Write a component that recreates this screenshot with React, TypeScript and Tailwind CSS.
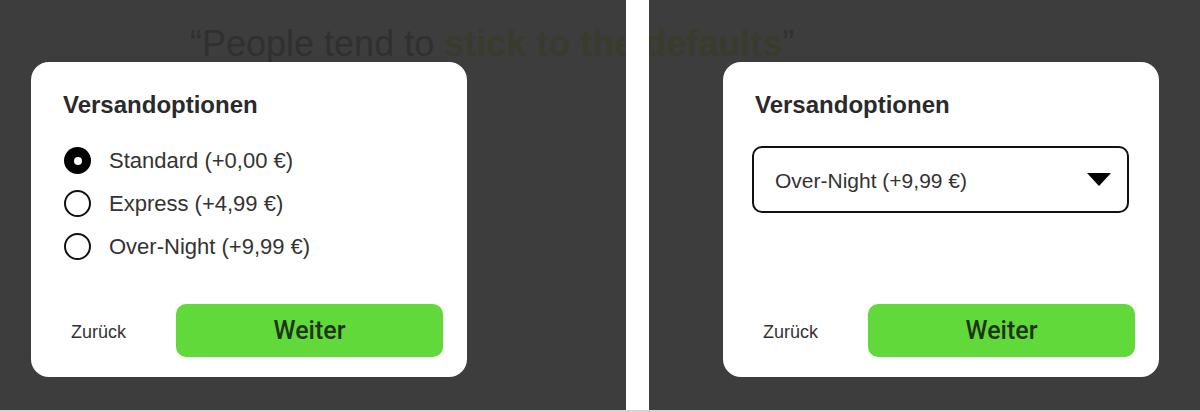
const options = ['Standard (+0,00 €)', 'Express (+4,99 €)', 'Over-Night (+9,99 €)'];

const Radio = ({ checked }: { checked: boolean }) =>
  checked ? (
    <span className="w-[27px] h-[27px] rounded-full bg-black flex items-center justify-center shrink-0">
      <span className="w-[8px] h-[8px] rounded-full bg-white" />
    </span>
  ) : (
    <span className="w-[27px] h-[27px] rounded-full border-2 border-[#111] bg-white shrink-0" />
  );

const Footer = () => (
  <div className="mt-auto flex items-center pb-[20px] pr-[24px]">
    <button className="ml-[40px] pt-[3px] text-[18px] text-[#333]">Zurück</button>
    <button
      className="ml-auto w-[267px] h-[53px] rounded-[10px] bg-[#62d93a] text-[25px] font-medium text-[#1f3418]"
      style={{ fontFamily: 'Roboto, "Liberation Sans", sans-serif' }}
    >
      Weiter
    </button>
  </div>
);

const Card = ({ children }: { children: React.ReactNode }) => (
  <div className="relative z-10 w-[436px] h-[315px] rounded-[18px] bg-white flex flex-col">
    <h2 className="pl-[32px] pt-[29px] text-[24px] leading-[28px] font-bold text-[#2a2a2a]">
      Versandoptionen
    </h2>
    {children}
    <Footer />
  </div>
);

export default function App() {
  return (
    <div
      className="relative w-[1200px] h-[412px] bg-[#3d3d3d] overflow-hidden"
      style={{ fontFamily: '"Liberation Sans", Arial, sans-serif' }}
    >
      {/* quote sits behind the cards and the divider */}
      <div className="absolute left-[190px] top-[24px] text-[36px] leading-[40px] text-[#303030] whitespace-nowrap">
        “People tend to <span className="text-[#393b2c] font-bold">stick to the defaults</span>”
      </div>

      <div className="flex h-[410px]">
        {/* radio variant */}
        <div className="w-[626px] pl-[31px] pt-[62px]">
          <Card>
            <div className="pl-[33px] pt-[20px] flex flex-col">
              {options.map((o, i) => (
                <label key={o} className="h-[43px] flex items-center gap-[18px] text-[22px] text-[#333]">
                  <Radio checked={i === 0} />
                  {o}
                </label>
              ))}
            </div>
          </Card>
        </div>

        <div className="relative z-10 w-[23px] bg-white" />

        {/* dropdown variant */}
        <div className="flex-1 pl-[74px] pt-[62px]">
          <Card>
            <div className="pl-[29px] pr-[30px] pt-[27px]">
              <div className="h-[67px] rounded-[10px] border-2 border-[#111] flex items-center pl-[21px] pr-[16px]">
                <span className="pt-[3px] text-[21px] text-[#333]">Over-Night (+9,99 €)</span>
                <svg className="ml-auto" width="24" height="13" viewBox="0 0 24 13">
                  <path d="M0 0 H24 L12 13 Z" fill="#000" />
                </svg>
              </div>
            </div>
          </Card>
        </div>
      </div>
      <div className="h-[2px] bg-[#d4d4d4]" />
    </div>
  );
}
